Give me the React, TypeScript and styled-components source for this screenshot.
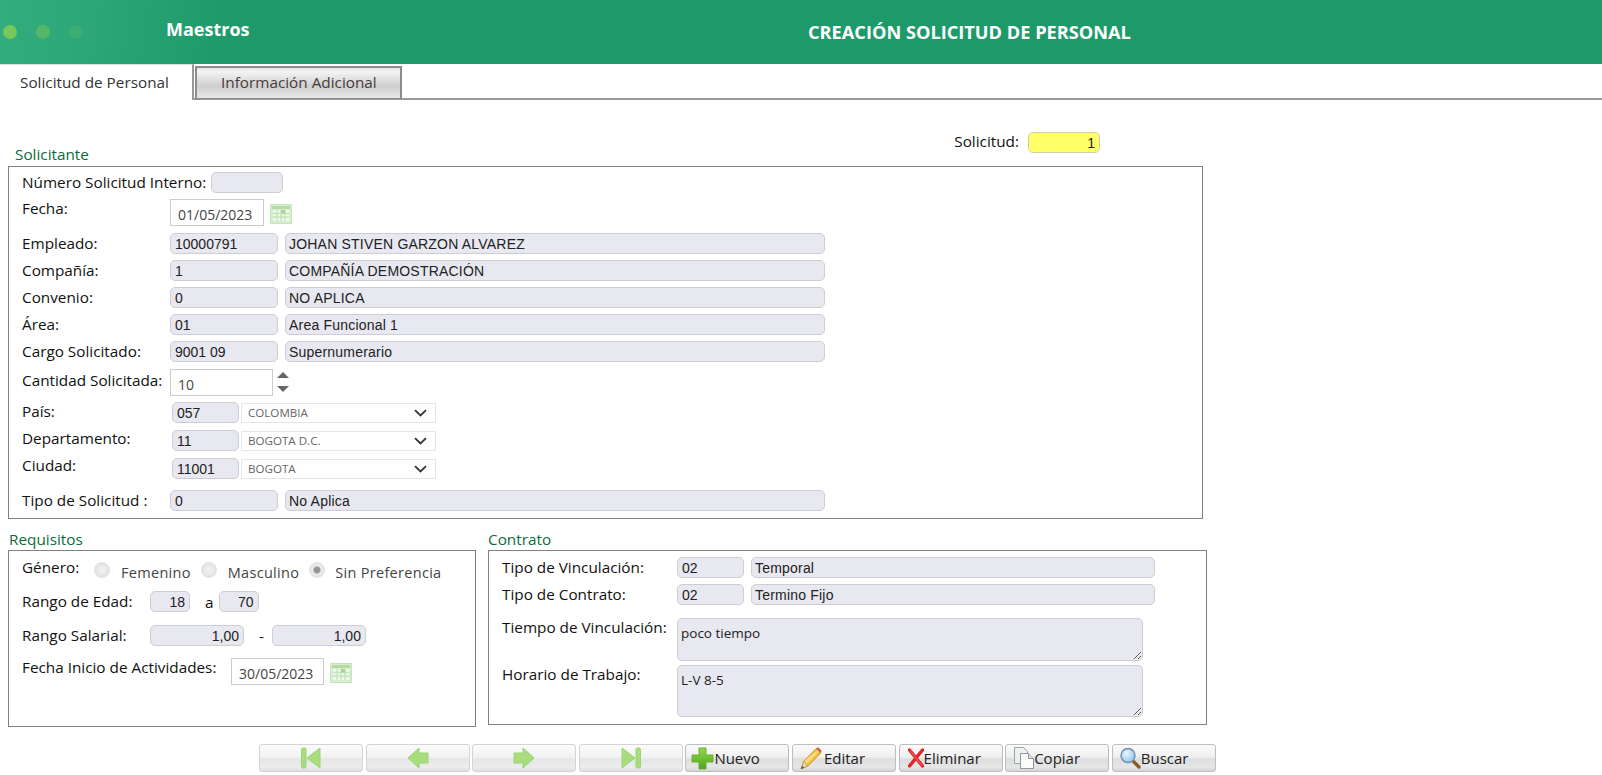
import React from "react";
import styled, { createGlobalStyle } from "styled-components";

const Global = createGlobalStyle`
  html, body { margin: 0; padding: 0; background: #fff; }
  body { font-family: "Open Sans", "Noto Sans", sans-serif; color: #111; overflow: hidden; }
  * { box-sizing: border-box; }
`;

const Page = styled.div`
  width: 1602px;
  height: 775px;
  overflow: hidden;
`;

const Header = styled.header`
  height: 64px;
  display: flex;
  align-items: center;
  background: linear-gradient(100deg, #33ac7e 0, #2da678 90px, #1e9a6a 230px);
  color: #fff;
`;

const Dots = styled.div`
  width: 166px;
  display: flex;
  gap: 19px;
  padding-left: 3px;
`;

const Dot = styled.span<{ $a: number }>`
  width: 14px;
  height: 14px;
  border-radius: 50%;
  background: #8fd04e;
  opacity: ${(p) => p.$a};
`;

const Brand = styled.div`
  width: 300px;
  font-size: 18px;
  font-weight: 700;
  margin-top: -6px;
`;

const Title = styled.h1`
  margin: 0 0 0 342px;
  font-size: 18.2px;
  font-weight: 700;
  white-space: nowrap;
`;

const Tabs = styled.nav`
  height: 36px;
  display: flex;
  align-items: flex-end;
  gap: 1px;
  border-bottom: 2px solid #999;
`;

const ActiveTab = styled.div`
  width: 194px;
  height: 36px;
  margin-bottom: -2px;
  background: #fff;
  border-right: 2px solid #999;
  border-top: 1px solid #ddd;
  font-size: 15.3px;
  color: #333;
  padding: 7px 0 0 20px;
`;

const Tab = styled.div`
  width: 207px;
  height: 33px;
  margin-bottom: -1px;
  border: 2px solid #8c8c8c;
  border-bottom-width: 1px;
  background: linear-gradient(#e4e4e4 0, #f4f4f4 12%, #cfcfcf 60%, #e8e8e8 100%);
  font-size: 15.3px;
  color: #4a3a3a;
  padding: 4px 0 0 24px;
`;

const Main = styled.main`
  padding-left: 8px;
`;

const TopLine = styled.div`
  width: 1195px;
  height: 66px;
  display: flex;
  align-items: flex-end;
  justify-content: space-between;
`;

const Legend = styled.div<{ $x?: number; $b?: number }>`
  color: #0b6b3a;
  font-size: 15.3px;
  line-height: 20px;
  padding-left: ${(p) => p.$x ?? 0}px;
  padding-bottom: ${(p) => p.$b ?? 0}px;
`;

const SolicitudWrap = styled.div`
  display: flex;
  align-items: center;
  gap: 9px;
  padding: 0 103px 13px 0;
`;

const Box = styled.section<{ $w: number; $h: number; $pl?: number; $pt?: number }>`
  width: ${(p) => p.$w}px;
  height: ${(p) => p.$h}px;
  border: 1px solid #808080;
  padding: ${(p) => p.$pt ?? 5}px 0 0 ${(p) => p.$pl ?? 13}px;
`;

const Row = styled.div<{ $mt?: number; $gap?: number }>`
  display: flex;
  align-items: center;
  margin-top: ${(p) => p.$mt ?? 0}px;
  gap: ${(p) => p.$gap ?? 0}px;
`;

const Label = styled.label<{ $w?: number; $up?: number; $dn?: number }>`
  width: ${(p) => (p.$w ? `${p.$w}px` : "auto")};
  flex: none;
  font-size: 15.3px;
  line-height: 14px;
  padding-bottom: 2px;
  color: #111;
  white-space: nowrap;
  margin-top: ${(p) => p.$dn ?? 0}px;
  margin-bottom: ${(p) => p.$up ?? 0}px;
`;

const Field = styled.input<{ $w: number; $ml?: number; $right?: boolean }>`
  width: ${(p) => p.$w}px;
  height: 21px;
  flex: none;
  margin: 0 0 0 ${(p) => p.$ml ?? 0}px;
  padding: 0 ${(p) => (p.$right ? 4 : 3)}px 0 4px;
  border: 1px solid #cdcdd4;
  border-radius: 5px;
  background: #e8e8f0;
  font: 14px "Liberation Sans", Arial, sans-serif;
  color: #222;
  text-align: ${(p) => (p.$right ? "right" : "left")};
  outline: none;
`;

const NameField = styled(Field)`
  padding-left: 3px;
  letter-spacing: 0.2px;
`;

const YellowField = styled(Field)`
  background: #ffff66;
  border-color: #cfcfa8;
`;

const DateField = styled.input<{ $w: number }>`
  width: ${(p) => p.$w}px;
  height: 27px;
  flex: none;
  margin: 0;
  padding: 3px 0 0 7px;
  border: 1px solid #ccc;
  background: #fff;
  font: 14px "Open Sans", sans-serif;
  color: #444;
  outline: none;
`;

const IconSlot = styled.span`
  display: inline-flex;
  flex: none;
  margin: 2px 0 0 6px;
`;

const Spinner = styled.div`
  display: flex;
  flex-direction: column;
  gap: 8px;
  margin: 0 0 2px 4px;
`;

const Select = styled.div`
  width: 195px;
  height: 20px;
  margin-left: 2px;
  flex: none;
  display: flex;
  align-items: center;
  justify-content: space-between;
  padding: 0 8px 0 6px;
  border: 1px solid #e6e6e6;
  font-size: 11.6px;
  color: #666;
`;

const RadioInput = styled.input`
  appearance: none;
  width: 16px;
  height: 16px;
  margin: 0;
  flex: none;
  border-radius: 50%;
  background: radial-gradient(circle at 50% 50%, #f2f2f2 0, #e8e8e8 50%, #d4d4d4 100%);
  border: 1px solid #e2e2e2;
  &:checked {
    background: radial-gradient(circle at 50% 50%, #8f8f8f 0, #9a9a9a 30%, #ececec 42%, #dcdcdc 100%);
  }
`;

const RadioText = styled.span<{ $ml: number; $mr: number }>`
  font-size: 14.5px;
  color: #444;
  letter-spacing: 0.3px;
  margin: 6px ${(p) => p.$mr}px 0 ${(p) => p.$ml}px;
  line-height: 20px;
  white-space: nowrap;
`;

const Between = styled.span<{ $ml: number; $mr: number }>`
  font-size: 15.3px;
  line-height: 16px;
  margin: 0 ${(p) => p.$mr}px 0 ${(p) => p.$ml}px;
`;

const Bottom = styled.div`
  display: flex;
  gap: 12px;
`;

const BottomCol = styled.div``;

const LegendLine = styled.div`
  height: 31px;
  display: flex;
  align-items: flex-end;
`;

const Area = styled.textarea<{ $h: number }>`
  width: 466px;
  height: ${(p) => p.$h}px;
  flex: none;
  margin: 0;
  padding: 5px 3px;
  border: 1px solid #cdcdd4;
  border-radius: 5px;
  background: #e8e8f0;
  font: 13.5px "Open Sans", sans-serif;
  color: #222;
  outline: none;
  resize: both;
  overflow: hidden;
`;

const TopAlign = styled(Row)`
  align-items: flex-start;
`;

const Toolbar = styled.div`
  display: flex;
  gap: 2.6px;
  margin: 17px 0 0 251px;
`;

const Btn = styled.button`
  width: 104px;
  height: 28px;
  flex: none;
  display: flex;
  align-items: center;
  justify-content: flex-start;
  padding: 0 0 0 5px;
  border: 1px solid #bdbdbd;
  border-radius: 3px;
  background: linear-gradient(#fafafa 0, #f0f0f0 45%, #dedede 55%, #e6e6e6 85%, #d4d4d4 100%);
  font: 15px "Open Sans", sans-serif;
  color: #222;
`;

const NavBtn = styled(Btn)`
  justify-content: center;
  padding: 0;
  border-color: #d4d4d4;
  background: linear-gradient(#fbfbfb 0, #f3f3f3 45%, #e6e6e6 55%, #ececec 85%, #dedede 100%);
`;

const BtnIcon = styled.span<{ $ml?: number; $mr?: number }>`
  display: inline-flex;
  flex: none;
  margin: 0 ${(p) => p.$mr ?? 0}px 0 ${(p) => p.$ml ?? 0}px;
`;

const Calendar = () => (
  <svg width="22" height="20" viewBox="0 0 22 20">
    <rect x="0.5" y="0.5" width="21" height="19" fill="#d7edcd" stroke="#c8e4bc" />
    <rect x="2" y="2" width="18" height="3" fill="#b4dba6" />
    <rect x="3" y="6" width="16" height="11" fill="#f1f8ee" />
    <path d="M3 9.5h16M3 13h16M7 6v11M11 6v11M15 6v11" stroke="#c4e3b8" strokeWidth="1.3" />
    <rect x="11" y="6" width="4" height="3.5" fill="#abd49b" />
  </svg>
);

const Chevron = () => (
  <svg width="13" height="8" viewBox="0 0 13 8">
    <path d="M1 1.2l5.5 5.3L12 1.2" fill="none" stroke="#333" strokeWidth="1.8" />
  </svg>
);

const Tri = ({ up }: { up?: boolean }) => (
  <svg width="12" height="6" viewBox="0 0 12 6" style={{ display: "block" }}>
    <path d={up ? "M6 0L12 6H0z" : "M0 0H12L6 6z"} fill="#666" />
  </svg>
);

const navFill = "#a8dc7f";
const navStroke = "#9ad472";

const First = () => (
  <svg width="22" height="22" viewBox="0 0 22 22">
    <rect x="1.5" y="1" width="4.5" height="20" rx="1.5" fill={navFill} stroke={navStroke} />
    <path d="M7 11L20 1v20z" fill={navFill} stroke={navStroke} strokeLinejoin="round" />
  </svg>
);
const Last = () => (
  <svg width="22" height="22" viewBox="0 0 22 22">
    <rect x="16" y="1" width="4.5" height="20" rx="1.5" fill={navFill} stroke={navStroke} />
    <path d="M15 11L2 1v20z" fill={navFill} stroke={navStroke} strokeLinejoin="round" />
  </svg>
);
const Prev = () => (
  <svg width="22" height="22" viewBox="0 0 22 22">
    <path d="M1 11L12 1v5h9v10h-9v5z" fill={navFill} stroke={navStroke} strokeLinejoin="round" />
  </svg>
);
const Next = () => (
  <svg width="22" height="22" viewBox="0 0 22 22">
    <path d="M21 11L10 1v5H1v10h9v5z" fill={navFill} stroke={navStroke} strokeLinejoin="round" />
  </svg>
);
const Plus = () => (
  <svg width="23" height="23" viewBox="0 0 23 23">
    <defs>
      <linearGradient id="pg" x1="0" y1="0" x2="0" y2="1">
        <stop offset="0" stopColor="#8fd94a" />
        <stop offset="1" stopColor="#4fa51e" />
      </linearGradient>
    </defs>
    <path d="M8 1h7v7h7v7h-7v7H8v-7H1V8h7z" fill="url(#pg)" stroke="#66b034" strokeLinejoin="round" />
  </svg>
);
const Pencil = () => (
  <svg width="22" height="23" viewBox="0 0 22 23">
    <path d="M1 22l2.5-7.5L16 1.5l5 4.5L8 19z" fill="#f2bd3d" stroke="#c9932a" strokeWidth="0.8" strokeLinejoin="round" />
    <path d="M5 13.5L17.5 3l1.5 1.5L6.5 17z" fill="#f9dc7a" />
    <path d="M1 22l2.5-7.5L8 19z" fill="#e6d0a4" stroke="#a88a55" strokeWidth="0.5" />
    <path d="M1 22l1-3.2 2.2 2z" fill="#555" />
    <path d="M16 1.5l2-1.3 3.5 3.3L21 6z" fill="#d9534f" />
  </svg>
);
const Cross = () => (
  <svg width="16" height="20" viewBox="0 0 16 20">
    <path d="M1.5 2L14.5 18M14.5 2L1.5 18" stroke="#e4262c" strokeWidth="3.4" strokeLinecap="round" />
    <path d="M2 2.5l12 15" stroke="#f2777a" strokeWidth="0.9" />
  </svg>
);
const Copy = () => (
  <svg width="20" height="22" viewBox="0 0 20 22">
    <path d="M0.5 0.5h9l4 4v12H0.5z" fill="#eef1f1" stroke="#9aa5a5" />
    <path d="M6.5 6.5h8l5 5v10h-13z" fill="#fbfbfb" stroke="#8f9a9a" />
    <path d="M14.5 6.5v5h5" fill="#dfe3e3" stroke="#8f9a9a" />
  </svg>
);
const Lens = () => (
  <svg width="21" height="22" viewBox="0 0 21 22">
    <defs>
      <radialGradient id="lg" cx="0.4" cy="0.35" r="0.7">
        <stop offset="0" stopColor="#e8f6ff" />
        <stop offset="1" stopColor="#8fc5ea" />
      </radialGradient>
    </defs>
    <path d="M13 14l6 6" stroke="#8a5a2a" strokeWidth="3.4" strokeLinecap="round" />
    <circle cx="8" cy="8.5" r="7" fill="url(#lg)" stroke="#6b8fa8" strokeWidth="1.4" />
  </svg>
);

const Pair = ({ label, a, b, mt }: { label: string; a: string; b: string; mt: number }) => (
  <Row $mt={mt}>
    <Label $w={148}>{label}</Label>
    <Field $w={108} readOnly value={a} />
    <NameField $w={540} $ml={7} readOnly value={b} />
  </Row>
);

const Place = ({ label, code, name, mt, up }: { label: string; code: string; name: string; mt: number; up: number }) => (
  <Row $mt={mt}>
    <Label $w={150} $up={up}>{label}</Label>
    <Field $w={67} readOnly value={code} />
    <Select>
      {name}
      <Chevron />
    </Select>
  </Row>
);

const Contract = ({ label, a, b, mt }: { label: string; a: string; b: string; mt: number }) => (
  <Row $mt={mt}>
    <Label $w={175}>{label}</Label>
    <Field $w={67} readOnly value={a} />
    <NameField $w={404} $ml={7} readOnly value={b} />
  </Row>
);

export default function App() {
  return (
    <Page>
      <Global />
      <Header>
        <Dots>
          <Dot $a={0.75} />
          <Dot $a={0.4} />
          <Dot $a={0.15} />
        </Dots>
        <Brand>Maestros</Brand>
        <Title>CREACIÓN SOLICITUD DE PERSONAL</Title>
      </Header>
      <Tabs>
        <ActiveTab>Solicitud de Personal</ActiveTab>
        <Tab>Información Adicional</Tab>
      </Tabs>
      <Main>
        <TopLine>
          <Legend $x={7} $b={2}>Solicitante</Legend>
          <SolicitudWrap>
            <Label $up={2}>Solicitud:</Label>
            <YellowField $w={72} $right readOnly value="1" />
          </SolicitudWrap>
        </TopLine>
        <Box $w={1195} $h={353}>
          <Row>
            <Label $w={189}>Número Solicitud Interno:</Label>
            <Field $w={72} readOnly value="" />
          </Row>
          <Row $mt={6}>
            <Label $w={148} $up={7}>Fecha:</Label>
            <DateField $w={94} readOnly value="01/05/2023" />
            <IconSlot><Calendar /></IconSlot>
          </Row>
          <Pair label="Empleado:" a="10000791" b="JOHAN STIVEN GARZON ALVAREZ" mt={7} />
          <Pair label="Compañía:" a="1" b="COMPAÑÍA DEMOSTRACIÓN" mt={6} />
          <Pair label="Convenio:" a="0" b="NO APLICA" mt={6} />
          <Pair label="Área:" a="01" b="Area Funcional 1" mt={6} />
          <Pair label="Cargo Solicitado:" a="9001 09" b="Supernumerario" mt={6} />
          <Row $mt={7}>
            <Label $w={148} $up={3}>Cantidad Solicitada:</Label>
            <DateField $w={103} readOnly value="10" />
            <Spinner>
              <Tri up />
              <Tri />
            </Spinner>
          </Row>
          <Place label="País:" code="057" name="COLOMBIA" mt={6} up={1} />
          <Place label="Departamento:" code="11" name="BOGOTA D.C." mt={7} up={3} />
          <Place label="Ciudad:" code="11001" name="BOGOTA" mt={7} up={5} />
          <Pair label="Tipo de Solicitud :" a="0" b="No Aplica" mt={11} />
        </Box>
        <Bottom>
          <BottomCol>
            <LegendLine>
              <Legend $x={1} $b={1}>Requisitos</Legend>
            </LegendLine>
            <Box $w={468} $h={177} $pt={6}>
              <Row>
                <Label $w={72} $up={5}>Género:</Label>
                <RadioInput type="radio" name="g" disabled />
                <RadioText $ml={11} $mr={10}>Femenino</RadioText>
                <RadioInput type="radio" name="g" disabled />
                <RadioText $ml={11} $mr={10}>Masculino</RadioText>
                <RadioInput type="radio" name="g" disabled defaultChecked />
                <RadioText $ml={10} $mr={0}>Sin Preferencia</RadioText>
              </Row>
              <Row $mt={8}>
                <Label $w={128}>Rango de Edad:</Label>
                <Field $w={40} $right readOnly value="18" />
                <Between $ml={15} $mr={5}>a</Between>
                <Field $w={40} $right readOnly value="70" />
              </Row>
              <Row $mt={13}>
                <Label $w={128}>Rango Salarial:</Label>
                <Field $w={94} $right readOnly value="1,00" />
                <Between $ml={15} $mr={8}>-</Between>
                <Field $w={94} $right readOnly value="1,00" />
              </Row>
              <Row $mt={12}>
                <Label $w={209} $up={7}>Fecha Inicio de Actividades:</Label>
                <DateField $w={93} readOnly value="30/05/2023" />
                <IconSlot><Calendar /></IconSlot>
              </Row>
            </Box>
          </BottomCol>
          <BottomCol>
            <LegendLine>
              <Legend $b={1}>Contrato</Legend>
            </LegendLine>
            <Box $w={719} $h={175} $pt={6}>
              <Contract label="Tipo de Vinculación:" a="02" b="Temporal" mt={0} />
              <Contract label="Tipo de Contrato:" a="02" b="Termino Fijo" mt={6} />
              <TopAlign $mt={13}>
                <Label $w={175} $dn={2}>Tiempo de Vinculación:</Label>
                <Area $h={43} readOnly value="poco tiempo" />
              </TopAlign>
              <TopAlign $mt={4}>
                <Label $w={175} $dn={2}>Horario de Trabajo:</Label>
                <Area $h={52} readOnly value="L-V 8-5" />
              </TopAlign>
            </Box>
          </BottomCol>
        </Bottom>
        <Toolbar>
          <NavBtn disabled aria-label="Primero"><First /></NavBtn>
          <NavBtn disabled aria-label="Anterior"><Prev /></NavBtn>
          <NavBtn disabled aria-label="Siguiente"><Next /></NavBtn>
          <NavBtn disabled aria-label="Último"><Last /></NavBtn>
          <Btn><BtnIcon><Plus /></BtnIcon>Nuevo</Btn>
          <Btn><BtnIcon $ml={2} $mr={2}><Pencil /></BtnIcon>Editar</Btn>
          <Btn><BtnIcon $ml={3}><Cross /></BtnIcon>Eliminar</Btn>
          <Btn><BtnIcon $ml={3}><Copy /></BtnIcon>Copiar</Btn>
          <Btn><BtnIcon $ml={2}><Lens /></BtnIcon>Buscar</Btn>
        </Toolbar>
      </Main>
    </Page>
  );
}
